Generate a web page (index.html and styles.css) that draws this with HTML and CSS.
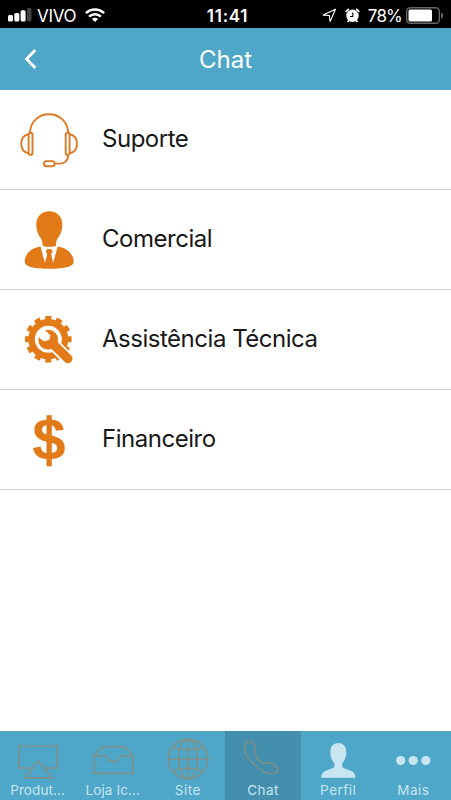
FILE: index.html
```html
<!DOCTYPE html>
<html lang="pt-BR">
<head>
    <meta charset="UTF-8">
    <meta name="viewport" content="width=device-width, initial-scale=1.0">
    <title>Chat</title>
    <link rel="stylesheet" href="styles.css">
</head>
<body>
    <div class="status-bar">
        <div class="status-left">
            <svg class="signal" width="24" height="14" viewBox="0 0 24 14" fill="#fff">
                <rect x="0" y="7" width="5" height="6.5" rx="1.5"/>
                <rect x="6.3" y="4.9" width="5" height="8.6" rx="1.5"/>
                <rect x="12.6" y="2.2" width="5" height="11.3" rx="1.5"/>
                <rect x="18.9" y="0" width="4.6" height="13.5" rx="1.5" fill="#444"/>
            </svg>
            <span class="carrier">VIVO</span>
            <svg width="20" height="14" viewBox="0 0 20 14" fill="none" stroke="#fff" stroke-width="2.5">
                <path d="M.9 5.2a13 13 0 0 1 18.2 0"/>
                <path d="M4.1 8.6a8.4 8.4 0 0 1 11.8 0"/>
                <path d="M6.9 11.1a4.5 4.5 0 0 1 6.2 0L10 14z" fill="#fff" stroke="none"/>
            </svg>
        </div>
        <div class="status-time">11:41</div>
        <div class="status-right">
            <svg width="15" height="15" viewBox="0 0 15 15" fill="none" stroke="#fff" stroke-width="1.1" stroke-linejoin="round">
                <path d="M13.5 1.2L1.2 7.1l6.2.4.7 6z"/>
            </svg>
            <svg class="alarm" width="15" height="15" viewBox="0 0 15 15">
                <circle cx="7.5" cy="7.8" r="6.2" fill="#fff"/>
                <path d="M.7 3.8L3.8 1M14.3 3.8L11.2 1M3.8 12.5l-1.2 1.6M11.2 12.5l1.2 1.6" stroke="#fff" stroke-width="1.7"/>
                <path d="M7.8 4.5v4H4.9" fill="none" stroke="#000" stroke-width="1.1"/>
            </svg>
            <span class="percent">78%</span>
            <svg width="38" height="17" viewBox="0 0 38 17">
                <rect x=".7" y=".7" width="32.6" height="15.6" rx="3.5" fill="none" stroke="#666" stroke-width="1.4"/>
                <rect x="2.5" y="2.5" width="23.5" height="12" rx="1.5" fill="#fff"/>
                <path d="M35 5.5c3 1 3 5 0 6z" fill="#666"/>
            </svg>
        </div>
    </div>

    <div class="header">
        <svg class="back" width="14" height="22" viewBox="0 0 14 22" fill="none" stroke="#fff" stroke-width="2.8">
            <path d="M11.3 2L2.6 11l8.7 9"/>
        </svg>
        <h1>Chat</h1>
    </div>

    <div class="list">
        <div class="list-item">
            <svg class="icon" viewBox="0 0 60 60" fill="none" stroke="#dd7a25" stroke-width="1.9">
                <path d="M10.9 23C11.5 11.5 19.5 4.3 30 4.3S48.7 11.5 49.3 23"/>
                <rect x="9.6" y="22.8" width="3.9" height="22" rx="1.9"/>
                <rect x="46.7" y="22.8" width="3.9" height="22" rx="1.9"/>
                <path d="M9.4 24.2C4.4 25.3 2.3 29 2.3 33.8s2.1 8.5 7.1 9.5"/>
                <path d="M50.8 24.2c5 1.1 7.1 4.8 7.1 9.6s-2.1 8.5-7.1 9.5"/>
                <path d="M49.2 45.3c-.3 5.8-3 8.3-8.5 8.3h-5"/>
                <rect x="25" y="51.1" width="10.6" height="5.1" rx="2.4"/>
            </svg>
            <span>Suporte</span>
        </div>
        <div class="list-item">
            <svg class="icon" viewBox="0 0 60 60" fill="#e27a18">
                <path d="M30.3 1.2C38.5 1.2 43.4 7 43.4 14.8 43.4 20.5 41.3 25 38.6 28.5 37.2 30.5 37.3 33 37 35.5 36.5 37.3 24.1 37.3 23.6 35.5 23.3 33 23.4 30.5 22 28.5 19.3 25 17.2 20.5 17.2 14.8 17.2 7 22.1 1.2 30.3 1.2z"/>
                <path d="M21.5 36.5c-9 1.2-15.8 7.5-15.8 15.2 0 5.5 12 7 24.5 7s24.5-1.5 24.5-7c0-7.7-7-14-16-15.2L34.1 52.8 32.2 44.2 33.7 41.5 32.2 39h-4L26.7 41.5l1.5 2.7-2.3 8.6z"/>
            </svg>
            <span>Comercial</span>
        </div>
        <div class="list-item">
            <svg class="icon" viewBox="0 0 60 60">
                <circle cx="29.3" cy="29.2" r="16.6" fill="none" stroke="#e27a18" stroke-width="7"/>
                <!-- 12 gear teeth -->
                <circle cx="29.3" cy="29.2" r="21.3" fill="none" stroke="#e27a18" stroke-width="4" pathLength="120" stroke-dasharray="5.5 4.5" stroke-dashoffset="2.75"/>
                <path d="M32 32l20 20" stroke="#fff" stroke-width="12.5"/>
                <circle cx="29.3" cy="29.2" r="13.4" fill="#fff"/>
                <path d="M33 33l16 15.7" stroke="#e27a18" stroke-width="9" stroke-linecap="round"/>
                <path d="M26 20.3c6-2.3 12.4 1.8 13 8.3.3 7-5.5 12-11.5 10.6-5.5-.6-9.3-6-7.8-12l5.2 4.4 5.6-1.8.8-4.5z" fill="#e27a18"/>
            </svg>
            <span>Assistência Técnica</span>
        </div>
        <div class="list-item">
            <svg class="icon" viewBox="0 0 60 60" fill="#e27a18">
                <text class="dollar" x="30" y="50" text-anchor="middle">$</text>
                <rect x="27.5" y="5.3" width="5.3" height="51"/>
            </svg>
            <span>Financeiro</span>
        </div>
    </div>

    <div class="tab-bar">
        <div class="tab truncated">
            <svg class="tab-icon" viewBox="0 0 75 50">
                <path d="M30.5 37H19V14.9h38.5V37H46.2"/>
                <path d="M38.3 30l14.2 16.7H24.5z"/>
            </svg>
            <span>Produt...</span>
        </div>
        <div class="tab truncated">
            <svg class="tab-icon" viewBox="0 0 75 50">
                <path d="M26.7 15.7H50.5L57.7 25v17.3H19V25zM19 25h11c1.7 0 2 .8 2.7 2.4 2 4.5 9.2 4.5 11.2 0 .7-1.6 1-2.4 2.7-2.4h11"/>
            </svg>
            <span>Loja Ic...</span>
        </div>
        <div class="tab">
            <svg class="tab-icon" viewBox="0 0 75 50">
                <circle cx="38" cy="28" r="19.8"/>
                <ellipse cx="38" cy="28" rx="9.5" ry="19.8"/>
                <path d="M38 8.2v39.6M18.2 28h39.6M22.5 16.3c9 3.3 22 3.3 31 0M22.5 39.7c9-3.3 22-3.3 31 0"/>
            </svg>
            <span>Site</span>
        </div>
        <div class="tab active">
            <svg class="tab-icon" viewBox="0 0 75 50">
                <path d="M24.2 10.2c2.4-.8 6.6 4.5 6.6 7.3 0 2-2.7 2.8-1.6 5 2 4 6.5 8.5 10 10.2 2.2 1.2 3-1 5.4-1 3 0 8.6 4.2 8.4 6.7-.2 2.2-3.3 4.4-6.4 4.2C36 42 19.5 27.5 19.3 16.5c0-3 2.6-5.6 4.9-6.3z"/>
            </svg>
            <span>Chat</span>
        </div>
        <div class="tab">
            <svg class="tab-icon solid" viewBox="0 0 75 50">
                <path d="M37.3 12c5.2 0 8 3.7 8 9 0 4.5-1.2 8-3.6 10.7-.8 1-.8 4 .2 4.8 2.8 2.4 12.4 2.8 12.4 9v1.2h-34v-1.2c0-6.2 9.6-6.6 12.4-9 1-.8 1-3.8.2-4.8-2.4-2.7-3.6-6.2-3.6-10.7 0-5.3 2.8-9 8-9z"/>
            </svg>
            <span>Perfil</span>
        </div>
        <div class="tab">
            <svg class="tab-icon solid" viewBox="0 0 75 50">
                <circle cx="24.7" cy="29.5" r="4.6"/>
                <circle cx="37.2" cy="29.5" r="4.6"/>
                <circle cx="49.8" cy="29.5" r="4.6"/>
            </svg>
            <span>Mais</span>
        </div>
    </div>
</body>
</html>
```
FILE: styles.css
```css
body {
    font-family: Inter, "Liberation Sans", sans-serif;
    margin: 0;
    height: 800px;
    display: flex;
    flex-direction: column;
    background-color: #fff;
    overflow: hidden;
}
svg {
    display: block;
    flex: none;
}
.status-bar {
    display: grid;
    grid-template-columns: 1fr auto 1fr;
    align-items: center;
    height: 28px;
    padding: 0 7px 0 8px;
    box-sizing: border-box;
    background-color: #000;
    color: #fff;
    font-size: 17px;
    line-height: 28px;
}
.status-left,
.status-right {
    display: flex;
    align-items: center;
}
.status-right {
    justify-content: flex-end;
}
.carrier {
    margin: 2px 9px 0 5px;
    font-size: 17px;
    letter-spacing: -0.3px;
}
.status-time {
    padding: 1px 0 0 3px;
    font-weight: 600;
    letter-spacing: 0.7px;
}
.alarm {
    margin-left: 8px;
}
.percent {
    margin: 2px 4px 0 8px;
    letter-spacing: -0.8px;
}
.header {
    display: grid;
    grid-template-columns: 44px 1fr 44px;
    align-items: center;
    height: 62px;
    background-color: #4ea6c8;
    color: #fff;
}
.header h1 {
    margin: 0;
    font-size: 24px;
    font-weight: 400;
    text-align: center;
}
.back {
    margin-left: 24px;
}
.list {
    flex: 1;
}
.list-item {
    display: flex;
    align-items: center;
    gap: 23px;
    height: 99px;
    padding-left: 19px;
    border-bottom: 1px solid #d0d0d0;
    color: #181818;
    font-size: 24px;
    letter-spacing: -0.48px;
}
.list-item span {
    padding-bottom: 2px;
}
.icon {
    width: 60px;
    height: 60px;
    overflow: visible;
}
.dollar {
    font-family: "Liberation Sans", sans-serif;
    font-size: 60px;
    font-weight: bold;
    letter-spacing: 0;
}
.tab-bar {
    display: grid;
    grid-template-columns: repeat(6, 1fr);
    height: 69px;
    background-color: #4ea6c8;
}
.tab {
    color: #c8e6f1;
    font-size: 13.5px;
    line-height: 18px;
    letter-spacing: 0.5px;
    text-align: center;
    white-space: nowrap;
}
.tab.truncated {
    letter-spacing: 0.1px;
}
.tab.active {
    background-color: #448fad;
}
.tab-icon {
    width: 75px;
    height: 50px;
    fill: none;
    stroke: #848f83;
    stroke-width: 1.4;
}
.tab-icon.solid {
    fill: #c8e6f1;
    stroke: none;
}
```
